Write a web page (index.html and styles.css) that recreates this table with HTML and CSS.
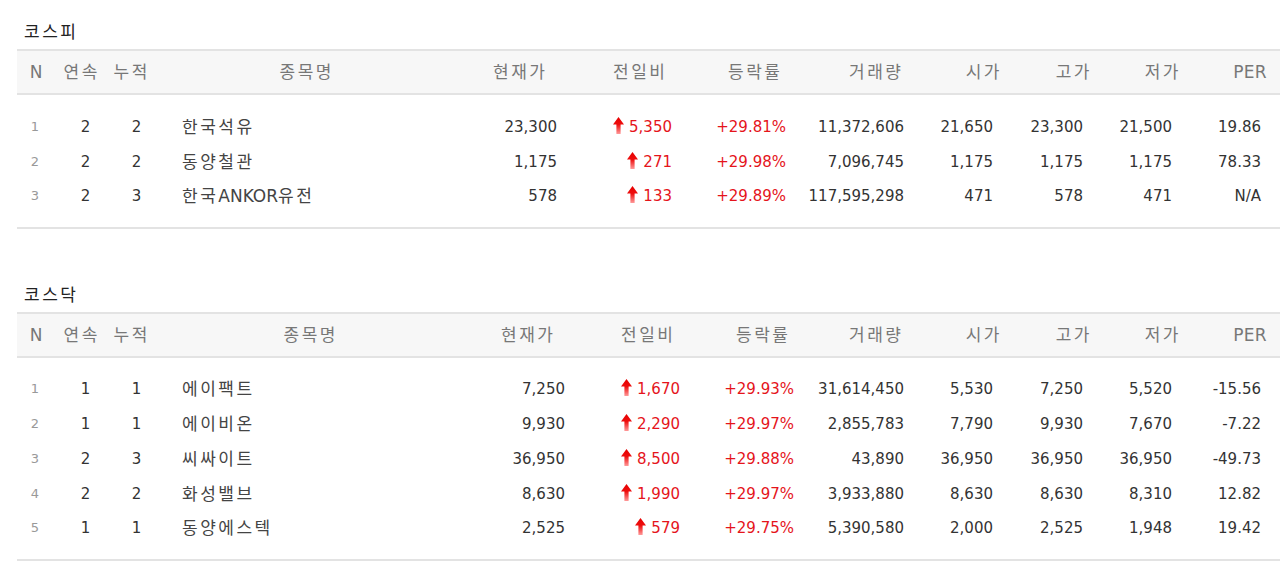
FILE: index.html
```html
<!DOCTYPE html>
<html lang="ko">
<head>
<meta charset="utf-8">
<title>상한가 종목</title>
<link rel="stylesheet" href="styles.css">
</head>
<body>
<svg class="defs" width="0" height="0" aria-hidden="true">
  <defs>
    <linearGradient id="upgrad" x1="0" y1="0" x2="0" y2="1">
      <stop offset="0" stop-color="#e60000"/>
      <stop offset="0.45" stop-color="#ee0f0f"/>
      <stop offset="1" stop-color="#ff9a9a"/>
    </linearGradient>
  </defs>
</svg>
<div class="page">
  <section class="market">
    <h2 class="market-title">코스피</h2>
    <div class="board board-kospi">
      <div class="row board-head">
        <span class="c-n lat">N</span><span class="c-streak">연속</span><span class="c-total">누적</span><span class="c-name">종목명</span><span class="c-price">현재가</span><span class="c-diff">전일비</span><span class="c-rate">등락률</span><span class="c-vol">거래량</span><span class="c-open">시가</span><span class="c-high">고가</span><span class="c-low">저가</span><span class="c-per lat">PER</span>
      </div>
      <div class="board-body">
        <div class="row">
          <span class="c-n">1</span><span class="c-streak">2</span><span class="c-total">2</span><span class="c-name">한국석유</span><span class="num">23,300</span><span class="num up"><svg class="arrow" viewBox="0 0 11 17"><path d="M5.5 0L11 7.5H7.6V17H3.4V7.5H0Z" fill="url(#upgrad)"/></svg>5,350</span><span class="num up">+29.81%</span><span class="num">11,372,606</span><span class="num">21,650</span><span class="num">23,300</span><span class="num">21,500</span><span class="num">19.86</span>
        </div>
        <div class="row">
          <span class="c-n">2</span><span class="c-streak">2</span><span class="c-total">2</span><span class="c-name">동양철관</span><span class="num">1,175</span><span class="num up"><svg class="arrow" viewBox="0 0 11 17"><path d="M5.5 0L11 7.5H7.6V17H3.4V7.5H0Z" fill="url(#upgrad)"/></svg>271</span><span class="num up">+29.98%</span><span class="num">7,096,745</span><span class="num">1,175</span><span class="num">1,175</span><span class="num">1,175</span><span class="num">78.33</span>
        </div>
        <div class="row">
          <span class="c-n">3</span><span class="c-streak">2</span><span class="c-total">3</span><span class="c-name">한국<span class="lat">ANKOR</span>유전</span><span class="num">578</span><span class="num up"><svg class="arrow" viewBox="0 0 11 17"><path d="M5.5 0L11 7.5H7.6V17H3.4V7.5H0Z" fill="url(#upgrad)"/></svg>133</span><span class="num up">+29.89%</span><span class="num">117,595,298</span><span class="num">471</span><span class="num">578</span><span class="num">471</span><span class="num">N/A</span>
        </div>
      </div>
    </div>
  </section>

  <section class="market">
    <h2 class="market-title">코스닥</h2>
    <div class="board board-kosdaq">
      <div class="row board-head">
        <span class="c-n lat">N</span><span class="c-streak">연속</span><span class="c-total">누적</span><span class="c-name">종목명</span><span class="c-price">현재가</span><span class="c-diff">전일비</span><span class="c-rate">등락률</span><span class="c-vol">거래량</span><span class="c-open">시가</span><span class="c-high">고가</span><span class="c-low">저가</span><span class="c-per lat">PER</span>
      </div>
      <div class="board-body">
        <div class="row">
          <span class="c-n">1</span><span class="c-streak">1</span><span class="c-total">1</span><span class="c-name">에이팩트</span><span class="num">7,250</span><span class="num up"><svg class="arrow" viewBox="0 0 11 17"><path d="M5.5 0L11 7.5H7.6V17H3.4V7.5H0Z" fill="url(#upgrad)"/></svg>1,670</span><span class="num up">+29.93%</span><span class="num">31,614,450</span><span class="num">5,530</span><span class="num">7,250</span><span class="num">5,520</span><span class="num">-15.56</span>
        </div>
        <div class="row">
          <span class="c-n">2</span><span class="c-streak">1</span><span class="c-total">1</span><span class="c-name">에이비온</span><span class="num">9,930</span><span class="num up"><svg class="arrow" viewBox="0 0 11 17"><path d="M5.5 0L11 7.5H7.6V17H3.4V7.5H0Z" fill="url(#upgrad)"/></svg>2,290</span><span class="num up">+29.97%</span><span class="num">2,855,783</span><span class="num">7,790</span><span class="num">9,930</span><span class="num">7,670</span><span class="num">-7.22</span>
        </div>
        <div class="row">
          <span class="c-n">3</span><span class="c-streak">2</span><span class="c-total">3</span><span class="c-name">씨싸이트</span><span class="num">36,950</span><span class="num up"><svg class="arrow" viewBox="0 0 11 17"><path d="M5.5 0L11 7.5H7.6V17H3.4V7.5H0Z" fill="url(#upgrad)"/></svg>8,500</span><span class="num up">+29.88%</span><span class="num">43,890</span><span class="num">36,950</span><span class="num">36,950</span><span class="num">36,950</span><span class="num">-49.73</span>
        </div>
        <div class="row">
          <span class="c-n">4</span><span class="c-streak">2</span><span class="c-total">2</span><span class="c-name">화성밸브</span><span class="num">8,630</span><span class="num up"><svg class="arrow" viewBox="0 0 11 17"><path d="M5.5 0L11 7.5H7.6V17H3.4V7.5H0Z" fill="url(#upgrad)"/></svg>1,990</span><span class="num up">+29.97%</span><span class="num">3,933,880</span><span class="num">8,630</span><span class="num">8,630</span><span class="num">8,310</span><span class="num">12.82</span>
        </div>
        <div class="row">
          <span class="c-n">5</span><span class="c-streak">1</span><span class="c-total">1</span><span class="c-name">동양에스텍</span><span class="num">2,525</span><span class="num up"><svg class="arrow" viewBox="0 0 11 17"><path d="M5.5 0L11 7.5H7.6V17H3.4V7.5H0Z" fill="url(#upgrad)"/></svg>579</span><span class="num up">+29.75%</span><span class="num">5,390,580</span><span class="num">2,000</span><span class="num">2,525</span><span class="num">1,948</span><span class="num">19.42</span>
        </div>
      </div>
    </div>
  </section>
</div>
</body>
</html>
```

FILE: styles.css
```css
html, body {
  margin: 0;
  padding: 0;
  background: #fff;
}

body {
  font-family: "DejaVu Sans", "Noto Sans CJK KR", sans-serif;
  color: #333;
  overflow: hidden;
}

.defs {
  position: absolute;
  width: 0;
  height: 0;
}

.page {
  padding: 20px 0 0 17px;
}

.market + .market {
  margin-top: 54px;
}

.market-title {
  margin: 0 0 5px 7px;
  font-size: 17px;
  font-weight: normal;
  line-height: 24px;
  letter-spacing: 2.5px;
  color: #222;
}

.row {
  display: grid;
  align-items: center;
  padding-right: 10px;
}

.board-kospi .row {
  grid-template-columns: 36px 55px 45px 305px 108px 115px 114px 118px 89px 90px 89px 89px;
}

.board-kosdaq .row {
  grid-template-columns: 36px 55px 45px 313px 108px 115px 114px 110px 89px 90px 89px 89px;
}

.row > span {
  display: block;
  line-height: 20px;
  white-space: nowrap;
}

.lat {
  letter-spacing: 0.3px;
}

/* header */
.board-head {
  height: 42px;
  background: #f7f7f7;
  border-top: 2px solid #e3e3e3;
  border-bottom: 2px solid #e3e3e3;
  color: #777;
  font-size: 17px;
  letter-spacing: 2.5px;
}

.board-head span {
  text-align: right;
}

.board-head .c-n,
.board-head .c-streak,
.board-head .c-total,
.board-head .c-name {
  text-align: center;
  padding-left: 2.5px;
}

.board-head .c-price { padding-right: 18.5px; }
.board-head .c-diff { padding-right: 13.5px; }
.board-head .c-rate { padding-right: 12.5px; }
.board-head .c-vol { padding-right: 9.5px; }
.board-head .c-per { padding-right: 3px; }

/* body */
.board-body {
  padding: 15px 0 13.5px;
  border-bottom: 2px solid #e3e3e3;
  font-size: 15px;
}

.board-kospi .board-body .row {
  height: 34.5px;
}

.board-kosdaq .board-body {
  padding-top: 14px;
}

.board-kosdaq .board-body .row {
  height: 34.75px;
}

.board-body .c-n {
  text-align: center;
  font-size: 13px;
  color: #999;
}

.board-body .c-streak {
  text-align: center;
  padding-left: 10px;
}

.board-body .c-total {
  text-align: center;
  padding-left: 12px;
}

.board-body .c-name {
  padding-left: 29px;
  font-size: 17px;
  letter-spacing: 2.5px;
  color: #444;
}

.board-body .c-name .lat {
  letter-spacing: 0;
}

.num {
  text-align: right;
  padding-right: 9px;
}

.up {
  color: #e5141b;
}

.arrow {
  width: 11px;
  height: 17px;
  margin-right: 5px;
  vertical-align: -2px;
}
```
